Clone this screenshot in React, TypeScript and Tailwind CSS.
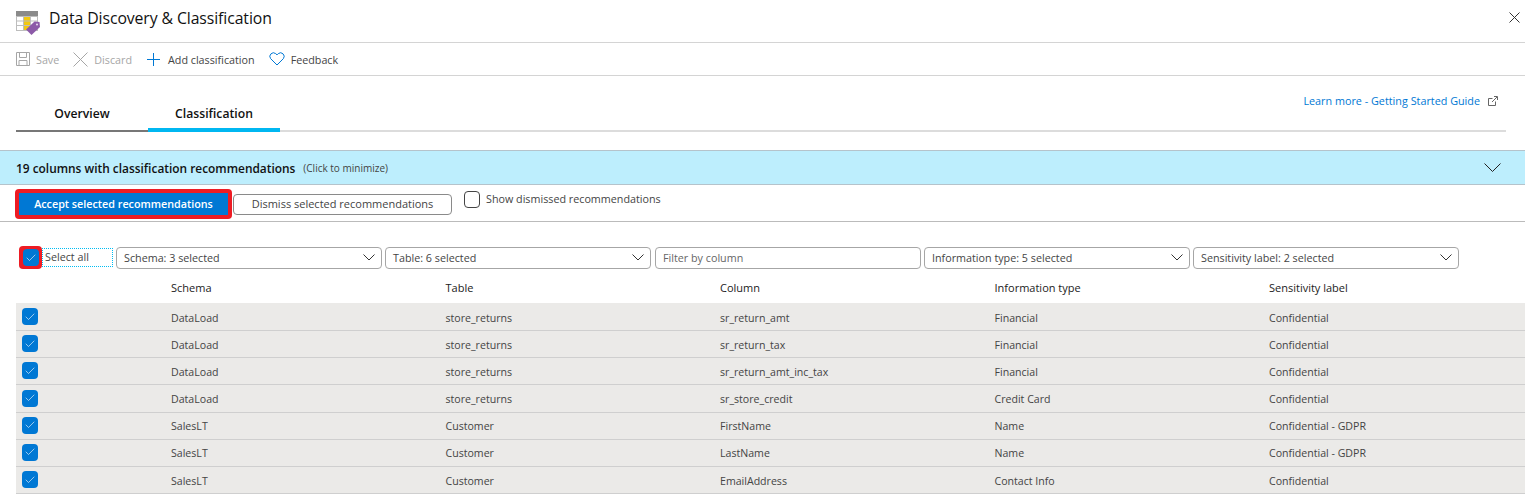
import { Check } from 'lucide-react';

const filters = ['Schema: 3 selected', 'Table: 6 selected', 'Filter by column', 'Information type: 5 selected', 'Sensitivity label: 2 selected'];
const columns = ['Schema', 'Table', 'Column', 'Information type', 'Sensitivity label'];
const rows = [
    ['DataLoad', 'store_returns', 'sr_return_amt', 'Financial', 'Confidential'],
    ['DataLoad', 'store_returns', 'sr_return_tax', 'Financial', 'Confidential'],
    ['DataLoad', 'store_returns', 'sr_return_amt_inc_tax', 'Financial', 'Confidential'],
    ['DataLoad', 'store_returns', 'sr_store_credit', 'Credit Card', 'Confidential'],
    ['SalesLT', 'Customer', 'FirstName', 'Name', 'Confidential - GDPR'],
    ['SalesLT', 'Customer', 'LastName', 'Name', 'Confidential - GDPR'],
    ['SalesLT', 'Customer', 'EmailAddress', 'Contact Info', 'Confidential'],
];

const BlueCheck = () => (
    <span className="flex h-[17px] w-4 items-center justify-center rounded-sm bg-[#0078d4]">
        <Check className="h-3 w-3 text-white" strokeWidth={1.2} />
    </span>
);

const TableTagIcon = () => (
    <svg width="24" height="24" viewBox="0 0 24 24" className="shrink-0">
        <rect x="0" y="0" width="22" height="5" fill="#8a8a8a" />
        <rect x="0" y="5" width="22" height="15" fill="#bdbdbd" />
        <rect x="1" y="6" width="6" height="3.5" fill="#fff" />
        <rect x="8" y="6" width="6" height="3.5" fill="#f2c811" />
        <rect x="15" y="6" width="6" height="3.5" fill="#fff" />
        <rect x="1" y="10.5" width="6" height="3.5" fill="#fff" />
        <rect x="8" y="10.5" width="6" height="3.5" fill="#f2c811" />
        <rect x="15" y="10.5" width="6" height="3.5" fill="#fff" />
        <rect x="1" y="15" width="6" height="4" fill="#fff" />
        <rect x="8" y="15" width="6" height="4" fill="#f2c811" />
        <path d="M10 18.5 L18.5 10.5 L23.5 11 L24 16 L15.5 24 Z" fill="#8c5aa8" />
        <circle cx="21" cy="13.5" r="1" fill="#e8dcef" />
    </svg>
);

const App = () => {
    return (
        <div className="h-[494px] w-[1525px] overflow-hidden bg-white font-['Open_Sans',sans-serif] text-[10.75px] text-[#444]">
            {/* Title */}
            <div className="flex h-[43px] items-start justify-between border-b border-[#d4d4d4] pl-4">
                <div className="flex items-start gap-[9px] pt-[11px]">
                    <TableTagIcon />
                    <h1 className="-mt-[4px] text-[15.8px] text-[#111] tracking-[-0.1px]">Data Discovery &amp; Classification</h1>
                </div>
                <svg width="11" height="11" viewBox="0 0 11 11" className="mr-[5px] mt-[12px]" stroke="#333" fill="none">
                    <path d="M.5 .5 L10.5 10.5 M10.5 .5 L.5 10.5" />
                </svg>
            </div>

            {/* Toolbar */}
            <div className="flex h-[33px] items-center border-b border-[#d4d4d4] pl-4">
                <svg width="14" height="14" viewBox="0 0 14 14" fill="none" stroke="#a6a6a6" className="shrink-0">
                    <path d="M.5 .5 H13.5 V13.5 H.5 Z M3.5 .5 V5.5 H10.5 V.5 M3 13.5 V8.5 H11 V13.5" />
                </svg>
                <span className="ml-[6px] pt-[2px] text-[#a6a6a6]">Save</span>
                <svg width="15" height="15" viewBox="0 0 15 15" fill="none" stroke="#a6a6a6" className="ml-[14px] shrink-0">
                    <path d="M.5 .5 L14.5 14.5 M14.5 .5 L.5 14.5" />
                </svg>
                <span className="ml-[6px] pt-[2px] text-[#a6a6a6]">Discard</span>
                <svg width="13" height="13" viewBox="0 0 13 13" fill="none" stroke="#0078d4" className="ml-[15px] shrink-0">
                    <path d="M0 6.5 H13 M6.5 0 V13" />
                </svg>
                <span className="ml-[8px] pt-[2px]">Add classification</span>
                <svg width="16" height="14" viewBox="0 0 16 14" fill="none" stroke="#0078d4" className="ml-[14px] shrink-0">
                    <path d="M8 13 L1.6 6.6 A3.6 3.6 0 0 1 6.7 1.6 L8 2.9 L9.3 1.6 A3.6 3.6 0 0 1 14.4 6.6 Z" />
                </svg>
                <span className="ml-[6px] pt-[2px]">Feedback</span>
            </div>

            {/* Tabs */}
            <div className="mb-[18px] ml-4 mr-[19px] flex h-[56px] justify-between border-b-2 border-[#dcdcdc]">
                <div className="flex">
                    <div className="-mb-[2px] flex w-[132px] items-center justify-center border-b-2 border-[#777] pt-[22px] text-[12.2px] font-semibold text-[#111]">Overview</div>
                    <div className="-mb-[2px] flex w-[132px] items-center justify-center border-b-4 border-[#00b7f1] pt-[24px] text-[12.2px] font-semibold text-[#111]">Classification</div>
                </div>
                <div className="flex items-start gap-2 pr-2 pt-[17px] text-[10.8px] text-[#0078d4]">
                    <span>Learn more - Getting Started Guide</span>
                    <svg width="10" height="10" viewBox="0 0 10 10" className="mt-[3px]" fill="none" stroke="#666">
                        <path d="M7.5 5.5 V9.5 H0.5 V2.5 H4.5" />
                        <path d="M4 6 L9 1 M6 .5 H9.5 V4" />
                    </svg>
                </div>
            </div>

            {/* Banner */}
            <div className="flex h-[35px] items-center justify-between border-y border-[#b5c3cb] bg-[#bdeefd] pl-4 pr-[24px]">
                <div className="flex items-center gap-[8px] pt-[3px]">
                    <span className="text-[11.9px] font-semibold text-[#111]">19 columns with classification recommendations</span>
                    <span className="text-[10px]">(Click to minimize)</span>
                </div>
                <svg width="17" height="9" viewBox="0 0 17 9" fill="none" stroke="#222">
                    <path d="M.5 .5 L8.5 8.5 L16.5 .5" />
                </svg>
            </div>

            {/* Actions */}
            <div className="flex h-[37px] items-start border-b border-[#bbb] pl-[15px] pt-[4px]">
                <div className="rounded-sm bg-[#ed1c24] p-1">
                    <button className="flex h-[22px] w-[209px] items-center justify-center bg-[#0078d4] pt-px font-semibold text-white">Accept selected recommendations</button>
                </div>
                <button className="ml-px mt-[5px] flex h-[21px] w-[219px] items-center justify-center rounded-sm border border-[#8a8a8a] text-[11px]">Dismiss selected recommendations</button>
                <span className="ml-3 mt-[2px] h-[17px] w-[16px] rounded-sm border border-[#444]" />
                <span className="ml-[6px] mt-[2px]">Show dismissed recommendations</span>
            </div>

            {/* Filters */}
            <div className="ml-[19px] mt-[24px] flex h-[23px] items-center">
                <span className="flex h-[23px] w-[23px] items-center justify-center rounded-sm bg-[#ed1c24]"><BlueCheck /></span>
                <div className="flex h-[19px] w-[71px] items-center border border-dotted border-[#00bcf2] pl-[2px]">Select all</div>
                <div className="ml-[3px] flex gap-[3px]">
                    {filters.map((f, i) => (
                        <div key={f} className={`flex h-[22px] w-[266px] items-center justify-between rounded-sm border border-[#a6a6a6] pl-[7px] pr-[6px] ${i === 2 ? 'ml-px text-[#666]' : ''}`}>
                            <span className="pt-px">{f}</span>
                            {i !== 2 && (
                                <svg width="12" height="7" viewBox="0 0 12 7" fill="none" stroke="#333">
                                    <path d="M.5 .5 L6 6 L11.5 .5" />
                                </svg>
                            )}
                        </div>
                    ))}
                </div>
            </div>

            {/* Table */}
            <div className="ml-4 mt-[5px]">
                <div className="flex h-[29px] items-center pl-[155px] text-[11px] text-[#222]">
                    {columns.map(c => <div key={c} className="w-[274.5px] shrink-0">{c}</div>)}
                </div>
                <div className="bg-[#ebeae8] pt-px text-[10.6px]">
                    {rows.map((r, i) => (
                        <div key={i} className="flex h-[27.17px] items-center border-b border-[#cfcfcf]">
                            <div className="-mt-px w-[155px] shrink-0 pl-[6px]"><BlueCheck /></div>
                            {r.map((cell, j) => <div key={j} className="w-[274.5px] shrink-0 whitespace-nowrap pt-[3px]">{cell}</div>)}
                        </div>
                    ))}
                </div>
            </div>
        </div>
    );
};

export default App;
